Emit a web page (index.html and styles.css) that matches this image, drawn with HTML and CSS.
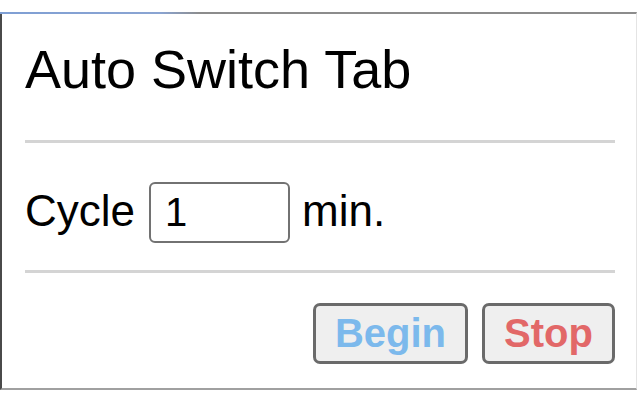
FILE: index.html
```html
<!DOCTYPE html>
<html>
<head>
<meta charset="utf-8">
<title>Auto Switch Tab</title>
<link rel="stylesheet" href="styles.css">
</head>
<body>
<div class="popup">
  <h1 class="title">Auto Switch Tab</h1>
  <div class="sep"></div>
  <div class="cycle-row">
    <span class="label">Cycle</span>
    <input class="cycle-input" type="text" value="1">
    <span class="label unit">min.</span>
  </div>
  <div class="sep sep-2"></div>
  <div class="actions">
    <button class="btn btn-begin">Begin</button>
    <button class="btn btn-stop">Stop</button>
  </div>
</div>
</body>
</html>
```
FILE: styles.css
```css
html, body {
  margin: 0;
  padding: 0;
  background: #ffffff;
}
body {
  font-family: "Liberation Sans", Arial, Helvetica, sans-serif;
  color: #000;
}
.popup {
  position: relative;
  box-sizing: border-box;
  width: 637px;
  margin-top: 12px;
  border-top: 2px solid #8c8c8c;
  border-left: 2px solid #4a4a4a;
  border-right: 1px solid #e4e4e4;
  border-bottom: 2px solid #a0a0a0;
  padding: 25px 21px 24px 23px;
  display: flex;
  flex-direction: column;
}
.popup::before {
  content: "";
  position: absolute;
  top: -2px;
  left: -2px;
  width: 200px;
  height: 2px;
  background: linear-gradient(to right, #7f9fd4 0%, #8aa4d2 80%, #8c8c8c 100%);
}
.title {
  margin: 0;
  font-size: 54px;
  font-weight: normal;
  line-height: 60px;
  height: 60px;
}
.sep {
  height: 3px;
  background: #d4d4d4;
  margin-top: 41px;
}
.sep-2 {
  margin-top: 27px;
}
.cycle-row {
  margin-top: 39px;
  display: flex;
  align-items: baseline;
  height: 61px;
}
.label {
  font-size: 44px;
}
.cycle-input {
  box-sizing: border-box;
  width: 141px;
  height: 61px;
  margin: 0 12px 0 14px;
  padding: 0 0 0 14px;
  border: 2px solid #727272;
  border-radius: 6px;
  font-family: "Liberation Sans", Arial, Helvetica, sans-serif;
  font-size: 40px;
  color: #000;
  background: #fff;
  outline: none;
}
.actions {
  margin-top: 30px;
  display: flex;
  justify-content: flex-end;
  gap: 14px;
}
.btn {
  box-sizing: border-box;
  height: 61px;
  padding: 0;
  border: 3px solid #6a6a6a;
  border-radius: 7px;
  background: #efefef;
  font-family: "Liberation Sans", Arial, Helvetica, sans-serif;
  font-weight: bold;
  font-size: 40px;
}
.btn-begin {
  width: 155px;
  color: #7cb9ec;
}
.btn-stop {
  width: 133px;
  color: #e26868;
}
```
